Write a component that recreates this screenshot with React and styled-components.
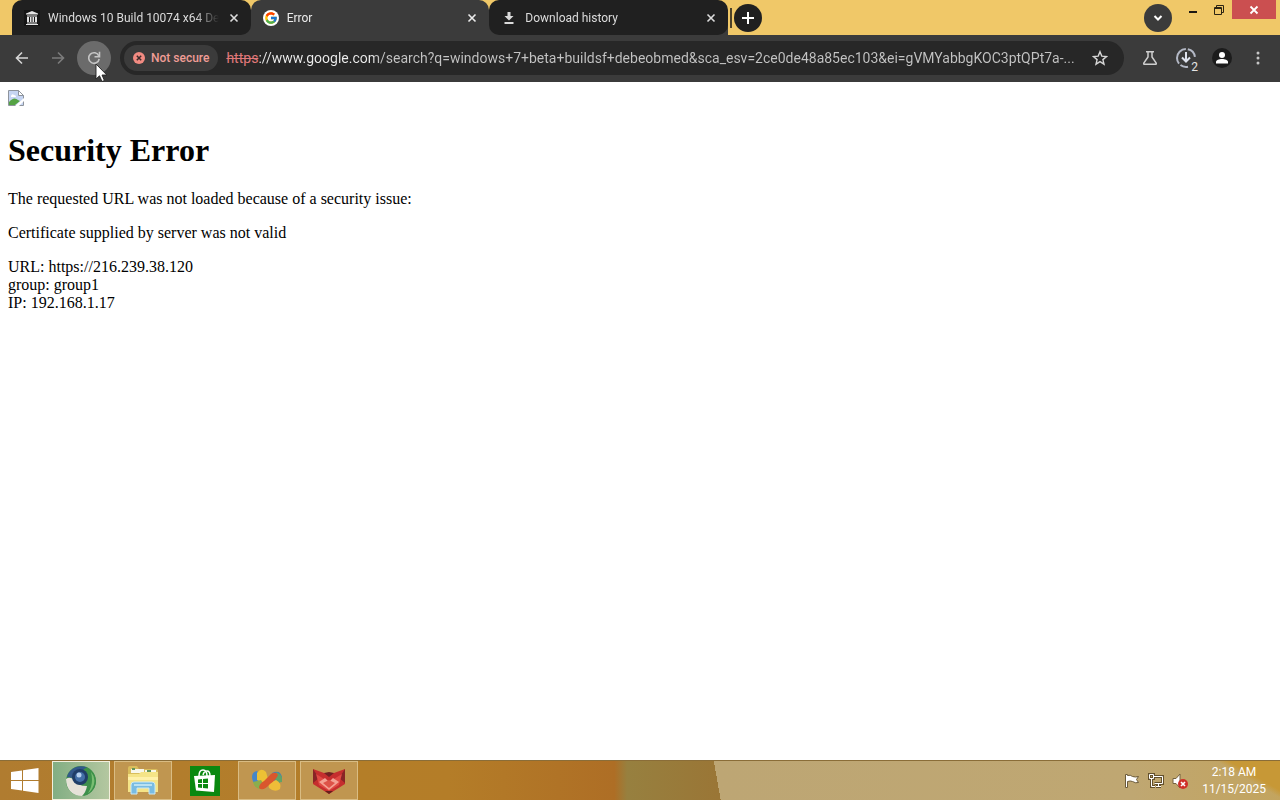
import React, { useState } from "react";
import styled, { createGlobalStyle, css } from "styled-components";
import { FcGoogle } from "react-icons/fc";

const PATH =
  "://www.google.com/search?q=windows+7+beta+buildsf+debeobmed&sca_esv=2ce0de48a85ec103&ei=gVMYabbgKOC3ptQPt7a-...";

const TABS = [
  { id: 1, title: "Windows 10 Build 10074 x64 De", icon: <ArchiveIcon /> },
  { id: 2, title: "Error", icon: <GoogleIcon /> },
  { id: 3, title: "Download history", icon: <DownloadIcon /> },
];

const TASKS = [
  { id: "browser", label: "Browser", state: "active", icon: <BrowserIcon /> },
  { id: "files", label: "File Explorer", state: "open", icon: <FolderIcon /> },
  { id: "store", label: "Store", state: "idle", icon: <StoreIcon /> },
  { id: "butterfly", label: "Messenger", state: "open", icon: <ButterflyIcon /> },
  { id: "fox", label: "Fox", state: "open", icon: <FoxIcon /> },
];

export default function App() {
  const [activeTab, setActiveTab] = useState(2);

  const renderTab = ({ id, title, icon }) => (
    <S.Tab key={id} $active={id === activeTab}>
      <S.TabLabel onClick={() => setActiveTab(id)}>
        {icon}
        <span>{title}</span>
      </S.TabLabel>
      <S.TabClose aria-label={`Close ${title}`}>
        <svg width="10" height="10" viewBox="0 0 10 10">
          <path d="M1.500 1.500l7 7M8.500 1.500l-7 7" stroke="currentColor" strokeWidth="1.6" />
        </svg>
      </S.TabClose>
    </S.Tab>
  );

  const renderTask = ({ id, label, state, icon }) => (
    <S.Task key={id} $state={state} aria-label={label}>
      {icon}
    </S.Task>
  );

  return (
    <S.Screen>
      <GlobalStyle />

      <S.TitleBar>
        <S.TabStrip>{TABS.map(renderTab)}</S.TabStrip>
        <S.Divider />
        <S.RoundButton aria-label="New tab">
          <svg width="14" height="14" viewBox="0 0 14 14">
            <path d="M7 1v12M1 7h12" stroke="#fff" strokeWidth="2" />
          </svg>
        </S.RoundButton>
        <S.WindowControls>
          <S.RoundButton $light aria-label="Search tabs">
            <svg width="10" height="8" viewBox="0 0 10 8">
              <path d="M1.500 2L5 5.500 8.500 2" fill="none" stroke="#fff" strokeWidth="2" />
            </svg>
          </S.RoundButton>
          <S.WindowButton aria-label="Minimize">
            <svg width="10" height="10" viewBox="0 0 10 10">
              <path d="M1 7h8" stroke="#1c1812" strokeWidth="2" />
            </svg>
          </S.WindowButton>
          <S.WindowButton aria-label="Restore">
            <svg width="12" height="12" viewBox="0 0 12 12">
              <g fill="none" stroke="#2c2412">
                <path d="M3.500 3V1.500h7v7H9" />
                <path d="M1.500 3.500h7v7h-7z" />
                <path d="M1 4.500h8" />
              </g>
            </svg>
          </S.WindowButton>
          <S.WindowButton $close aria-label="Close window">
            <svg width="10" height="10" viewBox="0 0 10 10">
              <path d="M1.500 1.500l7 7M8.500 1.500l-7 7" stroke="#fff" strokeWidth="1.8" />
            </svg>
          </S.WindowButton>
        </S.WindowControls>
      </S.TitleBar>

      <S.Toolbar>
        <S.IconButton aria-label="Back">
          <svg width="14" height="14" viewBox="0 0 14 14">
            <path d="M13 7H2M7 1.500L1.500 7 7 12.500" fill="none" stroke="#d6d6d6" strokeWidth="1.600" />
          </svg>
        </S.IconButton>
        <S.IconButton aria-label="Forward" disabled>
          <svg width="14" height="14" viewBox="0 0 14 14">
            <path d="M1 7h11M7 1.500L12.500 7 7 12.500" fill="none" stroke="#7c7c7c" strokeWidth="1.600" />
          </svg>
        </S.IconButton>
        <S.IconButton $hover aria-label="Reload">
          <svg width="14" height="14" viewBox="0 0 14 14">
            <path d="M11.800 4.800A5.300 5.300 0 1 0 12.200 8" fill="none" stroke="#c6c6c6" strokeWidth="1.6" />
            <path d="M12.500 0.800v5h-5" fill="none" stroke="#c6c6c6" strokeWidth="1.6" />
          </svg>
          <S.Pointer width="13" height="20" viewBox="0 0 13 20">
            <path
              d="M1 1v15l3.500-3.200L7 18.500l2.400-1L7 12h4.800z"
              fill="#fff"
              stroke="#222"
              strokeWidth="0.900"
            />
          </S.Pointer>
        </S.IconButton>

        <S.Omnibox>
          <S.Chip>
            <svg width="12" height="12" viewBox="0 0 12 12">
              <circle cx="6" cy="6" r="6" fill="#f28b82" />
              <path d="M3.800 3.800l4.400 4.400M8.200 3.800L3.800 8.200" stroke="#3c2a2a" strokeWidth="1.500" />
            </svg>
            Not secure
          </S.Chip>
          <S.Address>
            <del>https</del>
            <input type="text" aria-label="Address" defaultValue={PATH} spellCheck={false} />
          </S.Address>
          <S.StarButton aria-label="Bookmark this tab">
            <svg width="16" height="16" viewBox="0 0 16 16">
              <path
                d="M8 1.700l1.800 4.400 4.700.4-3.600 3.100 1.100 4.600L8 11.700l-4 2.500 1.100-4.600L1.500 6.500l4.700-.4z"
                fill="none"
                stroke="#d6d6d6"
                strokeWidth="1.400"
              />
            </svg>
          </S.StarButton>
        </S.Omnibox>

        <S.IconButton aria-label="Experiments">
          <svg width="16" height="16" viewBox="0 0 16 16">
            <path
              d="M4 1.700h8M6 2v5L1.800 13.200q-.4 1.100.8 1.100h10.800q1.200 0 .8-1.100L10 7V2"
              fill="none"
              stroke="#cfcfcf"
              strokeWidth="1.500"
            />
          </svg>
        </S.IconButton>
        <S.IconButton aria-label="Downloads">
          <svg width="22" height="22" viewBox="0 0 22 22">
            <circle
              cx="11"
              cy="11"
              r="9"
              fill="none"
              stroke="#b4b9c6"
              strokeWidth="2"
              strokeDasharray="0 12 8 2 20 2 11 2"
            />
            <path d="M11 5v9M7 10.500l4 4 4-4" fill="none" stroke="#dfe3ee" strokeWidth="2" />
          </svg>
          <S.Count>2</S.Count>
        </S.IconButton>
        <S.IconButton aria-label="Profile">
          <svg width="20" height="20" viewBox="0 0 20 20">
            <circle cx="10" cy="10" r="10" fill="#1c1c1c" />
            <circle cx="10" cy="7" r="3" fill="#fff" />
            <path d="M4 15.500v-1.500c0-4 12-4 12 0v1.500z" fill="#fff" />
          </svg>
        </S.IconButton>
        <S.IconButton aria-label="Menu">
          <svg width="4" height="16" viewBox="0 0 4 16">
            <g fill="#c6c6c6">
              <circle cx="2" cy="3" r="1.500" />
              <circle cx="2" cy="8" r="1.500" />
              <circle cx="2" cy="13" r="1.500" />
            </g>
          </svg>
        </S.IconButton>
      </S.Toolbar>

      <S.Page>
        <BrokenImage />
        <h1>Security Error</h1>
        <p>The requested URL was not loaded because of a security issue:</p>
        <p>Certificate supplied by server was not valid</p>
        <p>
          URL: https://216.239.38.120
          <br />
          group: group1
          <br />
          IP: 192.168.1.17
        </p>
      </S.Page>

      <S.Taskbar>
        <S.Start aria-label="Start">
          <svg width="28" height="26" viewBox="0 0 28 26">
            <path d="M0 4l11-1.600V12H0zM12 2.200L27.500 0v12H12zM0 13h11v9.600L0 21zM12 13h15.500v12L12 22.800z" fill="#fff" />
          </svg>
        </S.Start>
        <S.Tasks>{TASKS.map(renderTask)}</S.Tasks>
        <S.Tray>
          <FlagIcon />
          <NetworkIcon />
          <VolumeIcon />
          <S.Clock>
            <span>2:18 AM</span>
            <span>11/15/2025</span>
          </S.Clock>
        </S.Tray>
      </S.Taskbar>
    </S.Screen>
  );
}

function ArchiveIcon() {
  return (
    <svg width="16" height="16" viewBox="0 0 16 16">
      <rect width="16" height="16" fill="#151515" />
      <path
        d="M8 1l6 2.500v1H2v-1zM3 5.500h10v1H3zM3 7h2v5H3zM6 7h1.500v5H6zM8.500 7H10v5H8.500zM11 7h2v5h-2zM3 12.500h10v1H3zM2 14h12v1H2z"
        fill="#e4e4e4"
      />
    </svg>
  );
}

function GoogleIcon() {
  return (
    <S.Favicon>
      <FcGoogle size={14} />
    </S.Favicon>
  );
}

function DownloadIcon() {
  return (
    <svg width="16" height="16" viewBox="0 0 16 16">
      <path d="M6.500 2h3v4h3L8 10.500 3.500 6h3zM3.500 12h9v2h-9z" fill="#dadada" />
    </svg>
  );
}

function BrokenImage() {
  return (
    <svg width="16" height="16" viewBox="0 0 16 16">
      <path d="M.5.5h10l5 5v10H.5z" fill="#c6d5f2" stroke="#8e949d" />
      <path d="M10.500.500v5h5z" fill="#fff" stroke="#8e949d" />
      <path d="M3 6q1-3 3-1 2 0 2 2H3z" fill="#fff" />
      <path d="M1 15v-3q5-6 9-2l2 1-5 4z" fill="#55a344" />
      <path d="M7 16l9-8v3l-5 5z" fill="#fff" />
    </svg>
  );
}

function BrowserIcon() {
  return (
    <svg width="32" height="32" viewBox="0 0 32 32">
      <circle cx="16" cy="16" r="15" fill="#3f8f4d" />
      <path d="M2 12C4 4 13-1 22 2.500c-2 5-9 4-11 11z" fill="#33598a" />
      <path d="M22 2.500A15 15 0 0 1 18 31q9-8 5-16-1-4-7-6 1-5 6-6.500z" fill="#3d9149" />
      <path d="M26 7a14 14 0 0 1 1 17q-2 3-4 4 6-9 3-21z" fill="#79bd72" />
      <path d="M1 14q4-3 8 1 3 6 13 6-1 6-5 10C7 31 1 24 1 14z" fill="#e6e2d8" />
      <circle cx="15" cy="12" r="8" fill="#203e68" />
      <circle cx="15" cy="12" r="5" fill="#426fa7" />
      <circle cx="14" cy="10" r="2.500" fill="#b6d1ee" />
    </svg>
  );
}

function FolderIcon() {
  return (
    <svg width="32" height="32" viewBox="0 0 32 32">
      <path d="M1 3q0-2 2-2h7l2 3h17q2 0 2 2v20H1z" fill="#d9bd5c" />
      <path d="M4 4h13v4H4zM18 5h11v4H18z" fill="#f8f7e9" />
      <path d="M5 3h3v2H5zM20 5h4v2h-4z" fill="#63945b" />
      <path d="M1 9h11l2-2h17v20H1z" fill="#f5e487" />
      <path d="M1 12h30v3H1z" fill="#fff1a9" />
      <path d="M4 29V20q0-3 3-3h18q3 0 3 3v9h-6v-6H10v6z" fill="#79bce2" stroke="#cae9f5" />
      <path d="M7 20h18" stroke="#b9e1f2" strokeWidth="2" />
    </svg>
  );
}

function StoreIcon() {
  return (
    <svg width="30" height="30" viewBox="0 0 30 30">
      <rect width="30" height="30" fill="#0a8810" />
      <path d="M9 10q0-6 4-6t4 6M13 9q1-4 4-4t3 5" fill="none" stroke="#fff" strokeWidth="1.500" />
      <path d="M4 10l21-1-1 17-18-1.500z" fill="#fff" />
      <path d="M8 13.500l4-.5v4H8zM13 13l5-.6V17h-5zM8 18h4v4l-4-.5zM13 18h5v4.600l-5-.5z" fill="#0a8810" />
    </svg>
  );
}

function ButterflyIcon() {
  return (
    <svg width="32" height="32" viewBox="0 0 32 32">
      <path d="M1 12q0-5 5-6l6 8-5 6Q1 18 1 12z" fill="#4786c8" />
      <path d="M6 8q4-6 9-1l2 7-5 4-6-3z" fill="#edc134" />
      <path d="M2 17l8-2 3 5-4 4q-6-1-7-7z" fill="#8bad4d" />
      <path d="M21 8q8-4 10 4 0 6-5 6l-6-3z" fill="#467eba" />
      <path d="M25 7q7 2 6 10l-7 1z" fill="#61a266" />
      <path d="M17 18l8-3q6 3 4 9-5 4-11-1z" fill="#eebd38" />
      <path d="M8 23q0-4 5-7l7-7q5-3 7 1-2 5-8 9-7 8-11 4z" fill="#d9572d" />
    </svg>
  );
}

function FoxIcon() {
  return (
    <svg width="34" height="32" viewBox="0 0 34 32">
      <path d="M1 4l11 4h10l11-4v15L17 29 1 19z" fill="#c52e2e" />
      <path d="M1 4l6 9-6 5zM33 4l-6 9 6 5z" fill="#892426" />
      <path d="M12 8l5 4 5-4-5-1z" fill="#722022" />
      <path d="M4 9l13 8 13-8-3 11-10 6-10-6z" fill="#e04a43" />
      <path d="M7 17l6-4 4 4 4-4 6 4-10 8z" fill="#f4a193" />
      <path d="M11 18l6-3 6 3-6 5z" fill="#dd5348" />
      <path d="M13 26l4 3 4-3z" fill="#65201e" />
    </svg>
  );
}

function FlagIcon() {
  return (
    <svg width="16" height="16" viewBox="0 0 16 16">
      <path d="M1.500 1.500h2v1q3-1 5 1 3 1 6 0l-2 3 2 3q-3 1-6-1-2-1-5 0v6h-2z" fill="#fff" stroke="#6b5a39" />
    </svg>
  );
}

function NetworkIcon() {
  return (
    <svg width="16" height="16" viewBox="0 0 16 16">
      <g fill="none" stroke="#63502c" strokeWidth="3">
        <path d="M6 3.500h8.500v7h-8M8 13.500h5M10.500 11v2M3.500 6v7.500H7" />
        <path d="M1.500 1.500h4v4h-4z" />
      </g>
      <g fill="none" stroke="#fff">
        <path d="M6 3.500h8.500v7h-8M8 13.500h5M10.500 11v2M3.500 6v7.500H7" />
        <path d="M1.500 1.500h4v4h-4z" />
      </g>
    </svg>
  );
}

function VolumeIcon() {
  return (
    <svg width="16" height="16" viewBox="0 0 16 16">
      <path d="M1 5.500h3l4-4.500v14l-4-4.500H1z" fill="#fff" stroke="#766340" />
      <circle cx="11" cy="11" r="5" fill="#cf3029" />
      <path d="M9 9l4 4M13 9l-4 4" stroke="#fff" strokeWidth="1.600" />
    </svg>
  );
}

const GlobalStyle = createGlobalStyle`
  * {
    box-sizing: border-box;
  }

  body {
    margin: 0;
    background: #fff;
  }

  button {
    display: flex;
    align-items: center;
    justify-content: center;
    border: 0;
    padding: 0;
    background: none;
    font: inherit;
    color: inherit;
  }

  svg {
    flex: none;
  }
`;

const S = {
  Screen: styled.div`
    display: flex;
    flex-direction: column;
    min-height: 100vh;
    font-family: Roboto, "Noto Sans", sans-serif;
  `,

  TitleBar: styled.header`
    display: flex;
    align-items: center;
    height: 35px;
    padding-left: 12px;
    background: #f0c868;
  `,

  TabStrip: styled.div`
    display: flex;
    flex: 0 1 716px;
    min-width: 0;
    align-self: stretch;
    border-radius: 10px 10px 0 0;
    background: linear-gradient(#f0c868 50%, #3b3b3b 50%);
  `,

  Tab: styled.div`
    display: flex;
    align-items: center;
    flex: 1 1 0;
    min-width: 0;
    gap: 8px;
    padding: 0 10px 0 12px;
    border-radius: 10px;
    background: #202020;
    color: #dcdcdc;

    &:first-child {
      border-bottom-left-radius: 0;
    }

    ${({ $active }) =>
      $active &&
      css`
        border-radius: 10px 10px 0 0;
        background: #3b3b3b;
        color: #ececec;
      `}
  `,

  TabLabel: styled.button`
    && {
      flex: 1;
      min-width: 0;
      justify-content: flex-start;
      gap: 8px;
      font-size: 12px;
      line-height: 20px;
    }

    span {
      flex: 1;
      overflow: hidden;
      text-align: left;
      white-space: nowrap;
      mask-image: linear-gradient(to right, #000 86%, transparent);
    }
  `,

  TabClose: styled.button`
    && {
      width: 14px;
      height: 20px;
    }
  `,

  Favicon: styled.i`
    display: flex;
    align-items: center;
    justify-content: center;
    width: 16px;
    height: 16px;
    border-radius: 50%;
    background: #fff;
  `,

  Divider: styled.i`
    width: 2px;
    height: 20px;
    margin: 0 2px;
    background: #4c4128;
  `,

  RoundButton: styled.button`
    && {
      flex: none;
      width: 28px;
      height: 28px;
      border-radius: 50%;
      background: ${({ $light }) => ($light ? "#3b3b3b" : "#202020")};
    }
  `,

  WindowControls: styled.div`
    display: flex;
    align-items: center;
    align-self: stretch;
    margin-left: auto;
    padding-right: 4px;

    ${() => S.RoundButton} {
      margin-right: 8px;
    }
  `,

  WindowButton: styled.button`
    && {
      align-self: flex-start;
      width: ${({ $close }) => ($close ? "44px" : "26px")};
      height: 19px;
      background: ${({ $close }) => ($close ? "#cb4f50" : "none")};
    }
  `,

  Toolbar: styled.div`
    display: flex;
    align-items: center;
    gap: 2px;
    height: 47px;
    padding: 0 5px 2px;
    background: #3b3b3b;
  `,

  IconButton: styled.button`
    && {
      position: relative;
      flex: none;
      width: 34px;
      height: 34px;
      border-radius: 50%;
      background: ${({ $hover }) => ($hover ? "#6b6b6b" : "none")};
    }
  `,

  Pointer: styled.svg`
    position: absolute;
    top: 22px;
    left: 18px;
    z-index: 1;
  `,

  Count: styled.span`
    position: absolute;
    right: 5px;
    bottom: 2px;
    padding-left: 1px;
    background: #3b3b3b;
    font-size: 12px;
    line-height: 12px;
    color: #e4e4e4;
  `,

  Omnibox: styled.div`
    display: flex;
    align-items: center;
    flex: 1;
    min-width: 0;
    height: 34px;
    margin: 0 7px;
    padding: 0 8px 0 4px;
    border-radius: 17px;
    background: #272727;
  `,

  Chip: styled.button`
    && {
      flex: none;
      gap: 6px;
      height: 26px;
      padding: 0 9px;
      border-radius: 13px;
      background: #3b3b3b;
      font-size: 12px;
      font-weight: 500;
      color: #f09d96;
    }
  `,

  Address: styled.label`
    display: flex;
    align-items: center;
    flex: 1;
    min-width: 0;
    padding: 0 4px 0 8px;
    font-size: 14px;
    line-height: 20px;

    del {
      color: #e0787a;
    }

    input {
      flex: 1;
      min-width: 0;
      border: 0;
      outline: 0;
      padding: 0;
      background: linear-gradient(to right, #eeeeee 116px, #c4c4c4 116px);
      background-clip: text;
      font: inherit;
      color: transparent;
      caret-color: #fff;
    }
  `,

  StarButton: styled.button`
    && {
      width: 32px;
      height: 28px;
    }
  `,

  Page: styled.main`
    flex: 1;
    padding: 8px;
    background: #fff;
    color: #000;
    font-family: "Liberation Serif", serif;
    font-size: 16px;
    line-height: 18px;

    > svg {
      display: block;
    }

    h1 {
      margin: 24px 0 20px;
      font-size: 32px;
      line-height: 40px;
    }

    p {
      margin: 0 0 16px;
    }
  `,

  Taskbar: styled.footer`
    display: flex;
    align-items: stretch;
    height: 40px;
    border-top: 1px solid #8a6d38;
    background: linear-gradient(30deg, transparent 50%, #c79836 60%) right / 60px 40px no-repeat,
      linear-gradient(80deg, transparent 56%, #bda674 56%, #bfa772 88%, #c3a45e),
      linear-gradient(to right, #b07c30 0, #b47e28 28%, #b47d28 35%, #ae6e25 48%, #97803f 49%, #9a7636 56%);
  `,

  Start: styled.button`
    && {
      width: 50px;
    }
  `,

  Tasks: styled.nav`
    display: flex;
    gap: 4px;
    padding-left: 2px;
  `,

  Task: styled.button`
    && {
      width: 58px;
      border: 1px solid transparent;

      ${({ $state }) =>
        $state === "open" &&
        css`
          border-color: #d9bc83;
          background: #c09650;
        `}

      ${({ $state }) =>
        $state === "active" &&
        css`
          border-color: #f3efdc;
          background: linear-gradient(to right, #82ae83, #b4c7a0);
        `}
    }
  `,

  Tray: styled.div`
    display: flex;
    align-items: center;
    gap: 8px;
    margin-left: auto;
    padding-right: 14px;
  `,

  Clock: styled.time`
    display: flex;
    flex-direction: column;
    align-items: center;
    margin-left: 6px;
    font-size: 12px;
    line-height: 17px;
    color: #fff;
  `,
};
